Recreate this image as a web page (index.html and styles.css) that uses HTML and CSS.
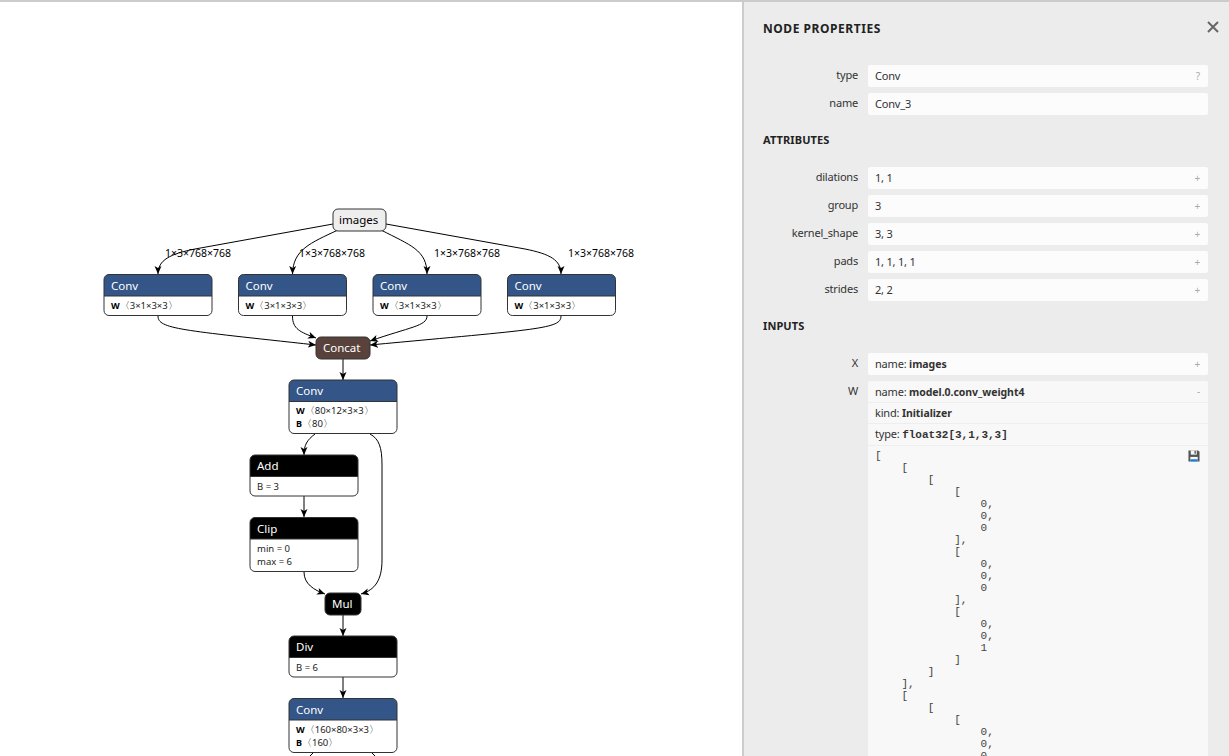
FILE: index.html
```html
<!DOCTYPE html>
<html lang="en">
<head>
    <meta charset="UTF-8">
    <title>Model graph</title>
    <link rel="stylesheet" href="styles.css">
</head>
<body>
<div class="page">
    <div class="graph">
        <svg class="graphSvg" width="742" height="754" viewBox="0 2 742 754">
            <defs>
                <marker id="arrow" markerWidth="9" markerHeight="8" refX="8" refY="4" orient="auto" markerUnits="userSpaceOnUse">
                    <path d="M0,0.5 L8,4 L0,7.5 L2,4 Z" fill="#000"/>
                </marker>
            </defs>

            <path class="edge" d="M333,224 L195,249 C170,254 158,260 158,274"/>
            <path class="edge" d="M338,230 C310,243 293,250 292.5,274"/>
            <path class="edge" d="M381,230 C410,245 427,250 427,274"/>
            <path class="edge" d="M386,224 L525,249 C550,254 561,260 561,274"/>
            <path class="edge" d="M158,316 C158,329 180,330 316,345"/>
            <path class="edge" d="M292.5,316 C292.5,329 300,332 316,338"/>
            <path class="edge" d="M427,316 C427,326 410,327 370,341"/>
            <path class="edge" d="M561,316 C561,329 540,329 370,345"/>
            <path class="edge" d="M343,359 L343,380"/>
            <path class="edge" d="M315,434 C307,440 304,445 304,455"/>
            <path class="edge" d="M370,434 C379,439 382,447 382,465 L382,560 C382,580 375,590 361,594"/>
            <path class="edge" d="M304,496 L304,517"/>
            <path class="edge" d="M304,572 C304,584 314,590 325,594"/>
            <path class="edge" d="M343,615 L343,636"/>
            <path class="edge" d="M343,677 L343,698"/>
            <path class="edgeEnd" d="M313,753 L310,756"/>
            <path class="edgeEnd" d="M372,753 L375,756"/>

            <text class="edgeLabel" x="165" y="257">1×3×768×768</text>
            <text class="edgeLabel" x="299" y="257">1×3×768×768</text>
            <text class="edgeLabel" x="434" y="257">1×3×768×768</text>
            <text class="edgeLabel" x="568" y="257">1×3×768×768</text>

            <rect class="box inputBox" x="333" y="209" width="53" height="22" rx="5"/>
            <text class="nodeName dark" x="339" y="224">images</text>

            <!-- first row of conv nodes -->
            <g transform="translate(104,274.5)">
                <path class="head blue" d="M0,21.5 V5 a5,5 0 0 1 5,-5 H103 a5,5 0 0 1 5,5 V21.5 Z"/>
                <rect class="box" width="108" height="41" rx="5"/>
                <line class="sep" x1="0" y1="21.5" x2="108" y2="21.5"/>
                <text class="nodeName" x="7" y="15.5">Conv</text>
                <text class="attr" x="7" y="34.5"><tspan class="key">W</tspan>〈3×1×3×3〉</text>
            </g>
            <g transform="translate(238.5,274.5)">
                <path class="head blue" d="M0,21.5 V5 a5,5 0 0 1 5,-5 H103 a5,5 0 0 1 5,5 V21.5 Z"/>
                <rect class="box" width="108" height="41" rx="5"/>
                <line class="sep" x1="0" y1="21.5" x2="108" y2="21.5"/>
                <text class="nodeName" x="7" y="15.5">Conv</text>
                <text class="attr" x="7" y="34.5"><tspan class="key">W</tspan>〈3×1×3×3〉</text>
            </g>
            <g transform="translate(373,274.5)">
                <path class="head blue" d="M0,21.5 V5 a5,5 0 0 1 5,-5 H103 a5,5 0 0 1 5,5 V21.5 Z"/>
                <rect class="box" width="108" height="41" rx="5"/>
                <line class="sep" x1="0" y1="21.5" x2="108" y2="21.5"/>
                <text class="nodeName" x="7" y="15.5">Conv</text>
                <text class="attr" x="7" y="34.5"><tspan class="key">W</tspan>〈3×1×3×3〉</text>
            </g>
            <g transform="translate(507.5,274.5)">
                <path class="head blue" d="M0,21.5 V5 a5,5 0 0 1 5,-5 H103 a5,5 0 0 1 5,5 V21.5 Z"/>
                <rect class="box" width="108" height="41" rx="5"/>
                <line class="sep" x1="0" y1="21.5" x2="108" y2="21.5"/>
                <text class="nodeName" x="7" y="15.5">Conv</text>
                <text class="attr" x="7" y="34.5"><tspan class="key">W</tspan>〈3×1×3×3〉</text>
            </g>

            <rect class="box brown" x="316" y="337" width="54" height="22" rx="5"/>
            <text class="nodeName" x="323" y="352">Concat</text>

            <g transform="translate(289,380)">
                <path class="head blue" d="M0,21.5 V5 a5,5 0 0 1 5,-5 H103 a5,5 0 0 1 5,5 V21.5 Z"/>
                <rect class="box" width="108" height="53.5" rx="5"/>
                <line class="sep" x1="0" y1="21.5" x2="108" y2="21.5"/>
                <text class="nodeName" x="7" y="14.5">Conv</text>
                <text class="attr" x="7" y="34"><tspan class="key">W</tspan>〈80×12×3×3〉</text>
                <text class="attr" x="7" y="47"><tspan class="key">B</tspan>〈80〉</text>
            </g>

            <g transform="translate(250,455)">
                <path class="head black" d="M0,21.5 V5 a5,5 0 0 1 5,-5 H103 a5,5 0 0 1 5,5 V21.5 Z"/>
                <rect class="box" width="108" height="41" rx="5"/>
                <line class="sep" x1="0" y1="21.5" x2="108" y2="21.5"/>
                <text class="nodeName" x="7" y="15">Add</text>
                <text class="attr" x="7" y="34.5">B = 3</text>
            </g>

            <g transform="translate(250,517.5)">
                <path class="head black" d="M0,21.5 V5 a5,5 0 0 1 5,-5 H103 a5,5 0 0 1 5,5 V21.5 Z"/>
                <rect class="box" width="108" height="54" rx="5"/>
                <line class="sep" x1="0" y1="21.5" x2="108" y2="21.5"/>
                <text class="nodeName" x="7" y="15.5">Clip</text>
                <text class="attr" x="7" y="34.5">min = 0</text>
                <text class="attr" x="7" y="47.5">max = 6</text>
            </g>

            <rect class="box black" x="325" y="593" width="36" height="22" rx="5"/>
            <text class="nodeName" x="332" y="608">Mul</text>

            <g transform="translate(289,636)">
                <path class="head black" d="M0,21.5 V5 a5,5 0 0 1 5,-5 H103 a5,5 0 0 1 5,5 V21.5 Z"/>
                <rect class="box" width="108" height="41" rx="5"/>
                <line class="sep" x1="0" y1="21.5" x2="108" y2="21.5"/>
                <text class="nodeName" x="7" y="15">Div</text>
                <text class="attr" x="7" y="34.5">B = 6</text>
            </g>

            <g transform="translate(289,698.5)">
                <path class="head blue" d="M0,21.5 V5 a5,5 0 0 1 5,-5 H103 a5,5 0 0 1 5,5 V21.5 Z"/>
                <rect class="box" width="108" height="54" rx="5"/>
                <line class="sep" x1="0" y1="21.5" x2="108" y2="21.5"/>
                <text class="nodeName" x="7" y="15.5">Conv</text>
                <text class="attr" x="7" y="34.5"><tspan class="key">W</tspan>〈160×80×3×3〉</text>
                <text class="attr" x="7" y="47.5"><tspan class="key">B</tspan>〈160〉</text>
            </g>
        </svg>
    </div>

    <div class="sidebar">
        <div class="sideHead">
            <span class="sideTitle">NODE PROPERTIES</span>
            <svg class="closeIcon" width="12" height="12" viewBox="0 0 12 12"><path d="M1,1 L11,11 M11,1 L1,11"/></svg>
        </div>

        <div class="rows">
            <div class="row">
                <div class="rowName">type</div>
                <div class="rowValue"><span>Conv</span><span class="mark">?</span></div>
            </div>
            <div class="row">
                <div class="rowName">name</div>
                <div class="rowValue"><span>Conv_3</span></div>
            </div>
        </div>

        <div class="sectionTitle">ATTRIBUTES</div>
        <div class="rows">
            <div class="row">
                <div class="rowName">dilations</div>
                <div class="rowValue"><span>1, 1</span><span class="mark">+</span></div>
            </div>
            <div class="row">
                <div class="rowName">group</div>
                <div class="rowValue"><span>3</span><span class="mark">+</span></div>
            </div>
            <div class="row">
                <div class="rowName">kernel_shape</div>
                <div class="rowValue"><span>3, 3</span><span class="mark">+</span></div>
            </div>
            <div class="row">
                <div class="rowName">pads</div>
                <div class="rowValue"><span>1, 1, 1, 1</span><span class="mark">+</span></div>
            </div>
            <div class="row">
                <div class="rowName">strides</div>
                <div class="rowValue"><span>2, 2</span><span class="mark">+</span></div>
            </div>
        </div>

        <div class="sectionTitle">INPUTS</div>
        <div class="rows">
            <div class="row">
                <div class="rowName">X</div>
                <div class="rowValue"><span>name: <b>images</b></span><span class="mark">+</span></div>
            </div>
            <div class="row">
                <div class="rowName">W</div>
                <div class="openValue">
                    <div class="openLine"><span>name: <b>model.0.conv_weight4</b></span><span class="mark">-</span></div>
                    <div class="openLine"><span>kind: <b>Initializer</b></span></div>
                    <div class="openLine"><span>type: <code>float32[3,1,3,3]</code></span></div>
                    <div class="tensor">
                        <svg class="saveIcon" width="12" height="12" viewBox="0 0 13 13">
                            <path d="M0.5,0.5 H11 L12.5,2 V12.5 H0.5 Z" fill="#555"/>
                            <rect x="3" y="0.5" width="6.5" height="4.5" fill="#f8f8f8"/>
                            <rect x="7" y="1" width="1.5" height="3" fill="#555"/>
                            <rect x="2.5" y="7.5" width="8" height="5" fill="#f8f8f8"/>
                            <rect x="2.5" y="10" width="8" height="2.5" fill="#1d7fd6"/>
                        </svg>
<pre>[
    [
        [
            [
                0,
                0,
                0
            ],
            [
                0,
                0,
                0
            ],
            [
                0,
                0,
                1
            ]
        ]
    ],
    [
        [
            [
                0,
                0,
                0</pre>
                    </div>
                </div>
            </div>
        </div>
    </div>
</div>
</body>
</html>
```

FILE: styles.css
```css
*{
    padding:0px;
    margin:0px;
    box-sizing: border-box;
}
html,body{
    height:100%;
    overflow: hidden;
    background-color: #fff;
}
body{
    font-family: "Noto Sans", "Open Sans", sans-serif;
    color:#333;
}
.page{
    display: flex;
    height:756px;
    border-top:2px solid #ccc;
    overflow: hidden;
}
.graph{
    width:742px;
    flex-shrink: 0;
}
.graphSvg{
    display: block;
}

/* graph */
.edge{
    fill:none;
    stroke:#000;
    stroke-width:1px;
    marker-end:url(#arrow);
}
.edgeEnd{
    fill:none;
    stroke:#000;
    stroke-width:1px;
}
.edgeLabel{
    font-size:10.5px;
    fill:#000;
}
.box{
    fill:none;
    stroke:#333;
    stroke-width:1px;
}
.inputBox{
    fill:#eee;
}
.brown{
    fill:#59423b;
}
.black{
    fill:#000;
}
.head{
    stroke:none;
}
.head.blue{
    fill:#335588;
}
.head.black{
    fill:#000;
}
.sep{
    stroke:#333;
    stroke-width:1px;
}
.nodeName{
    font-size:11.5px;
    fill:#fff;
}
.nodeName.dark{
    fill:#000;
}
.attr{
    font-size:9.5px;
    fill:#222;
}
.attr .key{
    font-size:9px;
    font-weight: bold;
    fill:#000;
}

/* sidebar */
.sidebar{
    width:487px;
    height:754px;
    background-color: #ececec;
    border-left:2px solid #ccc;
    padding:0px 21px 0px 19px;
    overflow: hidden;
    font-size:11px;
}
.sideHead{
    display: flex;
    justify-content: space-between;
    height:63px;
    padding-top:18px;
}
.sideTitle{
    font-size:12px;
    font-weight: bold;
    letter-spacing: 0.55px;
    color:#222;
    line-height:17px;
}
.closeIcon{
    margin-top:1px;
    margin-right:-11px;
}
.closeIcon path{
    stroke:#666;
    stroke-width:2px;
    fill:none;
}
.sectionTitle{
    font-size:11px;
    font-weight: bold;
    letter-spacing: 0.1px;
    color:#222;
    height:52px;
    padding-top:17px;
    line-height:16px;
}
.rows{
    display: flex;
    flex-direction: column;
    gap:6px;
}
.row{
    display: flex;
    gap:10px;
}
.rowName{
    width:95px;
    flex-shrink: 0;
    text-align: right;
    line-height:20px;
    letter-spacing: -0.2px;
}
.rowValue{
    flex:1;
    height:22px;
    line-height:22px;
    background-color: #fcfcfc;
    border-radius: 2px;
    padding:0px 7px;
    display: flex;
    justify-content: space-between;
    letter-spacing: -0.2px;
}
.rowValue b,.openLine b{
    font-size:10.5px;
    letter-spacing: -0.05px;
}
.mark{
    color:#a4acb4;
    font-size:10px;
    padding-right:1px;
}
.openValue{
    flex:1;
    background-color: #f8f8f8;
    border-radius: 2px;
}
.openLine{
    height:21.5px;
    line-height:20px;
    padding:0px 7px;
    display: flex;
    justify-content: space-between;
    border-bottom:1px solid #eee;
    letter-spacing: -0.2px;
}
.openLine:first-child{
    line-height:21px;
}
.openLine code{
    font-family: "Liberation Mono", monospace;
    font-size:11px;
    font-weight: bold;
    letter-spacing: 0px;
}
.tensor{
    position: relative;
    padding:4.5px 7px;
}
.tensor pre{
    font-family: "Liberation Mono", monospace;
    font-size:11px;
    line-height:12px;
    color:#444;
}
.saveIcon{
    position: absolute;
    top:4px;
    right:8px;
}
```
